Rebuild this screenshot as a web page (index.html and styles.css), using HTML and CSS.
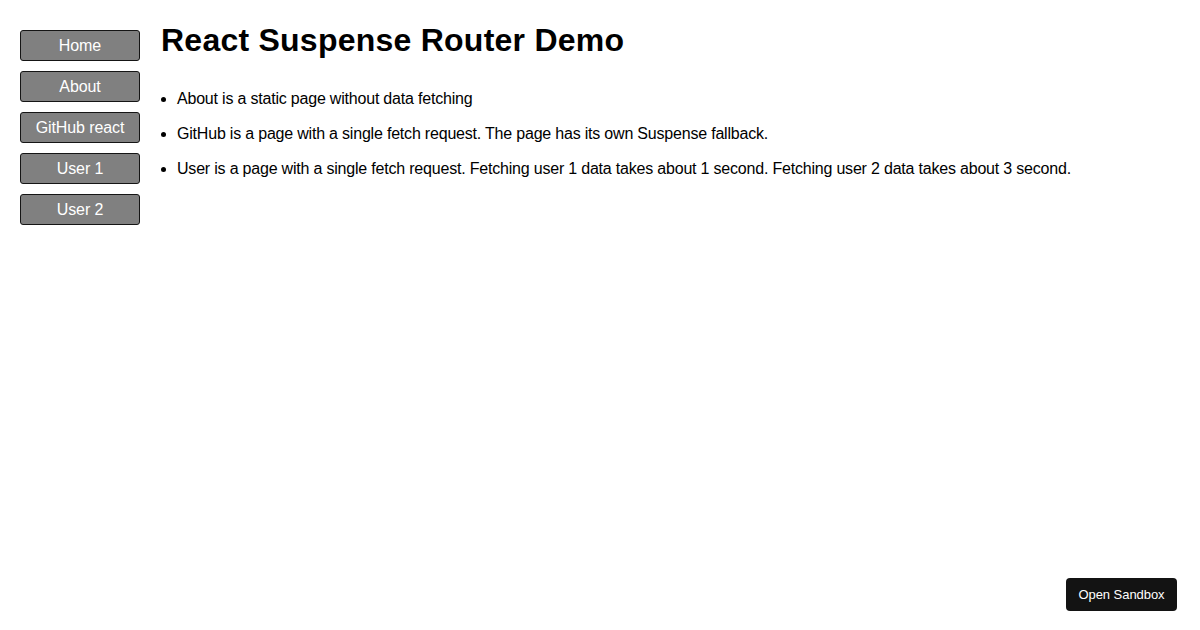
FILE: index.html
```html
<!DOCTYPE html>
<html lang="en">
<head>
<meta charset="utf-8">
<title>React Suspense Router Demo</title>
<link rel="stylesheet" href="styles.css">
</head>
<body>
<div class="app">
  <nav class="nav">
    <button class="nav-btn">Home</button>
    <button class="nav-btn">About</button>
    <button class="nav-btn">GitHub react</button>
    <button class="nav-btn">User 1</button>
    <button class="nav-btn">User 2</button>
  </nav>
  <main class="main">
    <h1 class="title">React Suspense Router Demo</h1>
    <ul class="list">
      <li>About is a static page without data fetching</li>
      <li>GitHub is a page with a single fetch request. The page has its own Suspense fallback.</li>
      <li>User is a page with a single fetch request. Fetching user 1 data takes about 1 second. Fetching user 2 data takes about 3 second.</li>
    </ul>
  </main>
</div>
<button class="sandbox-btn">Open Sandbox</button>
</body>
</html>
```

FILE: styles.css
```css
html, body {
  margin: 0;
  padding: 0;
  background: #ffffff;
  color: #000000;
  font-family: "Liberation Sans", Arial, sans-serif;
}

.app {
  display: flex;
  align-items: flex-start;
  gap: 20px;
  padding: 22px 20px 0 20px;
}

.nav {
  display: flex;
  flex-direction: column;
  gap: 10px;
  margin-top: 8px;
  flex: 0 0 120px;
}

.nav-btn {
  box-sizing: border-box;
  width: 120px;
  height: 31px;
  margin: 0;
  padding: 0;
  background: #808080;
  color: #ffffff;
  border: 1px solid #151515;
  border-radius: 3px;
  font-family: "Liberation Sans", Arial, sans-serif;
  font-size: 16px;
  line-height: 29px;
  letter-spacing: -0.1px;
  text-align: center;
  cursor: pointer;
}

.main {
  flex: 1 1 auto;
}

.title {
  margin: 0 0 32px 0;
  font-size: 32px;
  line-height: 36px;
  font-weight: bold;
  letter-spacing: 0.24px;
  padding-left: 1px;
}

.list {
  margin: 0;
  padding-left: 17px;
  font-size: 16px;
  letter-spacing: -0.2px;
}

.list li {
  line-height: 18px;
  margin-bottom: 17px;
}

.sandbox-btn {
  position: fixed;
  right: 23px;
  bottom: 19px;
  box-sizing: border-box;
  width: 111px;
  height: 33px;
  padding: 0;
  background: #131313;
  color: #ffffff;
  border: none;
  border-radius: 4px;
  font-family: "Liberation Sans", Arial, sans-serif;
  font-size: 13px;
  line-height: 33px;
  letter-spacing: -0.05px;
  text-align: center;
  cursor: pointer;
}
```
